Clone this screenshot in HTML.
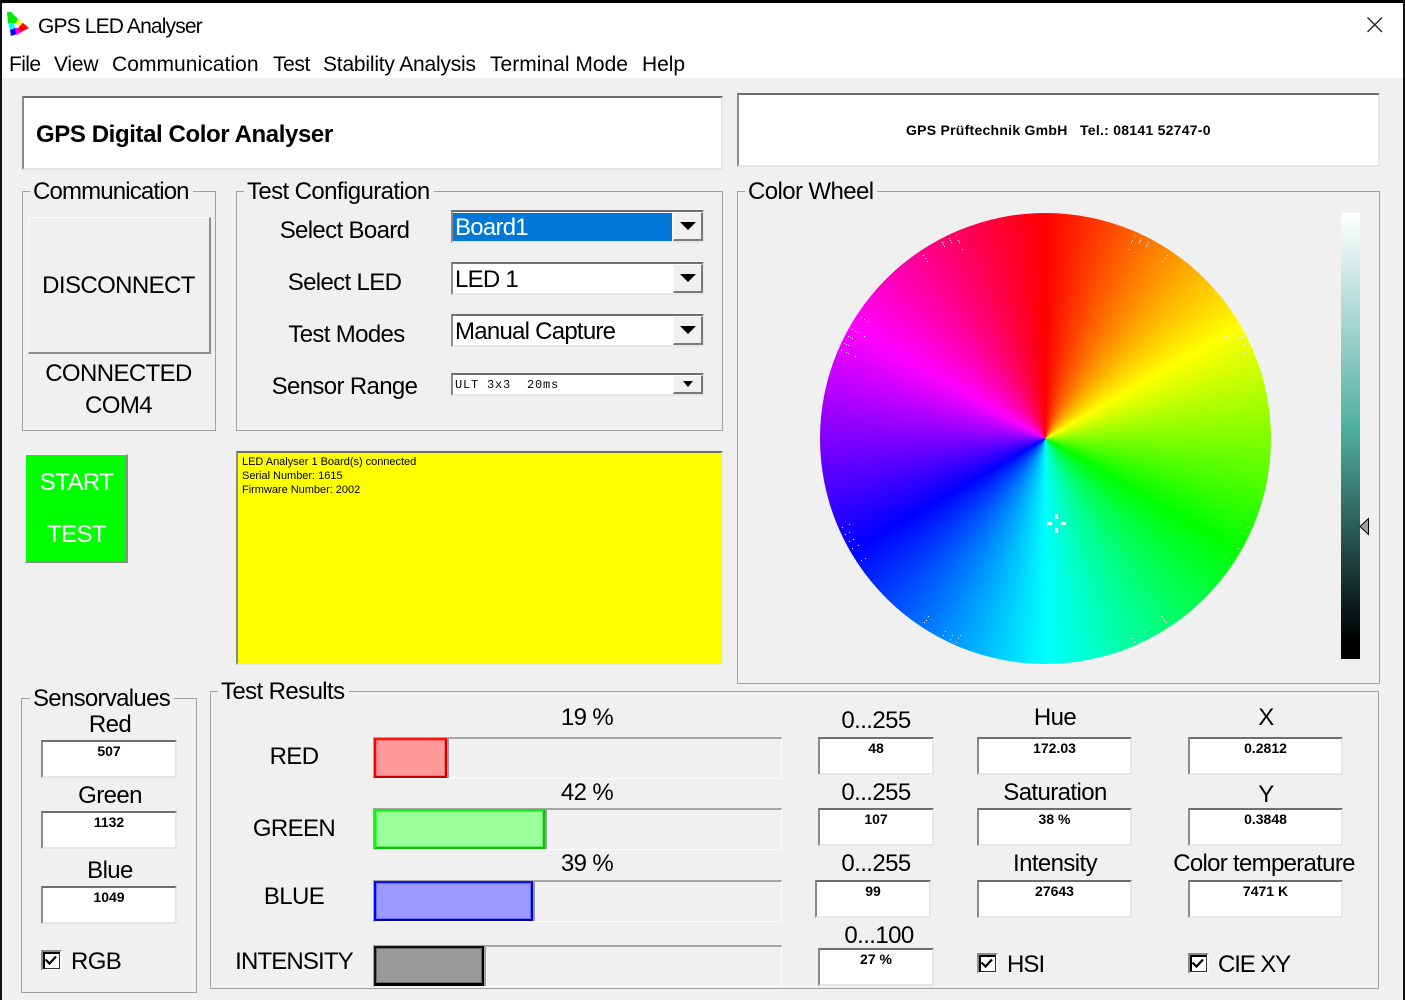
<!DOCTYPE html>
<html><head><meta charset="utf-8"><style>
html,body{margin:0;padding:0;width:1405px;height:1000px;overflow:hidden;background:#f0f0f0}
body{position:relative;font-family:"Liberation Sans",Arial,sans-serif;color:#000}
div,span{position:absolute;box-sizing:border-box}
.t{white-space:nowrap;font-size:24px;line-height:28px;letter-spacing:-.6px;margin-top:1px}
.c{text-align:center}
.g{border:1px solid #a0a0a0}
.lg{background:#f0f0f0;padding:0 4px 0 3px;white-space:nowrap;font-size:24px;line-height:28px;letter-spacing:-.6px;margin-top:1px}
.s{background:#fff;border-top:2px solid #6e6e6e;border-left:2px solid #8a8a8a;border-right:2px solid #e6e6e6;border-bottom:2px solid #e6e6e6}
.n{font-weight:bold;font-size:14px;line-height:16px;text-align:center;letter-spacing:0;padding-top:1px;white-space:nowrap}
.ar{background:#f0f0f0;border-right:2px solid #7a7a7a;border-bottom:2px solid #7a7a7a;border-top:1px solid #fff;border-left:1px solid #fff}
.ar i{position:absolute;left:50%;top:50%;width:0;height:0;margin-left:-8px;margin-top:-4px;border-left:8px solid transparent;border-right:8px solid transparent;border-top:8px solid #000}
.ar.sm i{margin-left:-5px;margin-top:-3px;border-left-width:5px;border-right-width:5px;border-top-width:6px}
.track{background:#f0f0f0;border-top:2px solid #a6a6a6;border-left:2px solid #a6a6a6;border-bottom:1px solid #fbfbfb;border-right:1px solid #fbfbfb}
.m{font-size:21px;letter-spacing:-.05px;top:50px}
.cb{width:21px;height:21px;background:#fff;border-top:2px solid #8a8a8a;border-left:2px solid #8a8a8a;border-right:2px solid #f8f8f8;border-bottom:2px solid #f8f8f8}
.cb i{position:absolute;left:0;top:0;right:0;bottom:0;border-top:2px solid #000;border-left:2px solid #000;border-right:1px solid #333;border-bottom:1px solid #333}
.f{border-style:solid;border-width:2px}
</style></head><body>
<div style="left:0;top:0;width:1405px;height:3px;background:#000"></div>
<div style="left:0;top:0;width:2px;height:1000px;background:#111"></div>
<div style="left:1403px;top:0;width:2px;height:1000px;background:#111"></div>
<div style="left:2px;top:3px;width:1401px;height:75px;background:#fff"></div>
<svg style="position:absolute;left:0;top:0" width="34" height="40" viewBox="0 0 34 40">
<path d="M7 12 L11 12 L20 21 L15 24 L8 23Z" fill="#00e800"/>
<path d="M8 23 L15 23 L15 29 L10 30Z" fill="#00ffff"/>
<path d="M10 30 L15 28 L17 34 L11 36Z" fill="#0000ff"/>
<path d="M15 28 L19 28 L22 32 L16 35Z" fill="#ff00ff"/>
<path d="M20 24 L23 23 L29 28 L21 32 L18 28Z" fill="#ff0000"/>
<path d="M18 19 L22 24 L19 27 L16 23Z" fill="#ffff00"/>
<path d="M14 23 L18 23 L19 28 L15 28Z" fill="#fff"/></svg>
<span class="t" style="left:38px;top:12px;font-size:21px;letter-spacing:-.85px">GPS LED Analyser</span>
<svg style="position:absolute;left:1366px;top:16px" width="18" height="18"><path d="M1.5 1.5L16 16M16 1.5L1.5 16" stroke="#222" stroke-width="1.3"/></svg>
<span class="t m" style="left:9px;letter-spacing:-.6px">File</span>
<span class="t m" style="left:54px;letter-spacing:-.2px">View</span>
<span class="t m" style="left:112px;letter-spacing:.05px">Communication</span>
<span class="t m" style="left:273px;letter-spacing:-.4px">Test</span>
<span class="t m" style="left:323px;letter-spacing:-.2px">Stability Analysis</span>
<span class="t m" style="left:490px;letter-spacing:.02px">Terminal Mode</span>
<span class="t m" style="left:642px">Help</span>

<div class="s" style="left:22px;top:96px;width:701px;height:74px"></div>
<span class="t" style="left:36px;top:120px;font-weight:bold;font-size:24px;letter-spacing:-.4px">GPS Digital Color Analyser</span>
<div class="s" style="left:737px;top:93px;width:643px;height:74px"></div>
<span class="t" style="left:906px;top:115px;font-weight:bold;font-size:14px;letter-spacing:.26px;white-space:pre">GPS Prüftechnik GmbH   Tel.: 08141 52747-0</span>

<div class="g" style="left:22px;top:191px;width:194px;height:240px"></div>
<span class="lg" style="left:30px;top:177px;letter-spacing:-.85px">Communication</span>
<div style="left:28px;top:217px;width:183px;height:137px;background:#f0f0f0;border-top:1px solid #fbfbfb;border-left:1px solid #fbfbfb;border-right:2px solid #8c8c8c;border-bottom:2px solid #8c8c8c"></div>
<div class="t c" style="left:28px;top:271px;width:181px">DISCONNECT</div>
<div class="t c" style="left:22px;top:359px;width:193px">CONNECTED</div>
<div class="t c" style="left:22px;top:391px;width:193px">COM4</div>

<div class="g" style="left:236px;top:191px;width:487px;height:240px"></div>
<span class="lg" style="left:244px;top:177px">Test Configuration</span>
<div class="t c" style="left:245px;top:216px;width:199px;letter-spacing:-.65px">Select Board</div>
<div class="t c" style="left:245px;top:268px;width:199px;letter-spacing:-.65px">Select LED</div>
<div class="t c" style="left:247px;top:320px;width:199px;letter-spacing:-.65px">Test Modes</div>
<div class="t c" style="left:245px;top:372px;width:199px;letter-spacing:-.65px">Sensor Range</div>

<div class="s" style="left:451px;top:210px;width:253px;height:33px"></div>
<div style="left:453px;top:213px;width:219px;height:28px;background:#0078d7"></div>
<span class="t" style="left:455px;top:213px;color:#fff;letter-spacing:-.75px">Board1</span>
<div class="ar" style="left:673px;top:212px;width:30px;height:29px"><i></i></div>
<div class="s" style="left:451px;top:262px;width:253px;height:33px"></div>
<span class="t" style="left:455px;top:265px;letter-spacing:-.75px">LED 1</span>
<div class="ar" style="left:673px;top:264px;width:30px;height:29px"><i></i></div>
<div class="s" style="left:451px;top:314px;width:253px;height:33px"></div>
<span class="t" style="left:455px;top:317px;letter-spacing:-.75px">Manual Capture</span>
<div class="ar" style="left:673px;top:316px;width:30px;height:29px"><i></i></div>
<div class="s" style="left:451px;top:373px;width:253px;height:23px"></div>
<span style="left:455px;top:378px;font-family:'Liberation Mono',monospace;font-size:12px;line-height:14px;white-space:pre;letter-spacing:.8px">ULT 3x3  20ms</span>
<div class="ar sm" style="left:673px;top:375px;width:30px;height:19px"><i></i></div>

<div style="left:25px;top:454px;width:103px;height:109px;background:#00ff00;border-top:1px solid #f8f8f8;border-left:1px solid #f8f8f8;border-right:2px solid #8c8c8c;border-bottom:2px solid #8c8c8c"></div>
<div class="t c" style="left:25px;top:468px;width:103px;color:#fff">START</div>
<div class="t c" style="left:25px;top:520px;width:103px;color:#fff">TEST</div>

<div class="s" style="left:236px;top:451px;width:487px;height:214px;background:#ffff00"></div>
<div style="left:242px;top:455px;font-size:11px;line-height:14px;white-space:nowrap;letter-spacing:-.02px">LED Analyser 1 Board(s) connected<br>Serial Number: 1615<br>Firmware Number: 2002</div>

<div class="g" style="left:737px;top:191px;width:643px;height:493px"></div>
<span class="lg" style="left:745px;top:177px">Color Wheel</span>
<div style="left:820px;top:213px;width:451px;height:451px;border-radius:50%;background:conic-gradient(#f00,#ff0,#0f0,#0ff,#00f,#f0f,#f00)"></div>
<svg style="position:absolute;left:0;top:0" width="1405" height="1000">
<path id="d" fill="#fff" d="M1241 524h1v1h-1zM1248 527h1v1h-1zM1241 532h1v1h-1zM1245 534h1v1h-1zM1237 539h1v1h-1zM1241 541h1v1h-1zM1232 545h1v1h-1zM1238 548h1v1h-1zM1225 558h1v1h-1zM1229 560h1v1h-1zM1162 616h1v1h-1zM1164 620h1v1h-1zM1166 622h1v1h-1zM1130 635h1v1h-1zM1132 638h1v1h-1zM1134 642h1v1h-1zM1138 635h1v1h-1zM1140 639h1v1h-1zM1145 631h1v1h-1zM1147 635h1v1h-1zM949 238h1v1h-1zM950 240h1v1h-1zM951 242h1v1h-1zM942 242h1v1h-1zM943 244h1v1h-1zM944 246h1v1h-1zM958 240h1v1h-1zM959 242h1v1h-1zM962 249h1v1h-1zM956 235h1v1h-1zM923 255h1v1h-1zM925 258h1v1h-1zM927 261h1v1h-1zM861 317h1v1h-1zM864 319h1v1h-1zM867 321h1v1h-1zM852 329h1v1h-1zM855 331h1v1h-1zM857 332h1v1h-1zM848 336h1v1h-1zM850 337h1v1h-1zM852 338h1v1h-1zM864 336h1v1h-1zM844 343h1v1h-1zM846 344h1v1h-1zM848 345h1v1h-1zM841 350h1v1h-1zM846 352h1v1h-1zM848 353h1v1h-1zM855 356h1v1h-1z"/>
<use href="#d" transform="translate(2091 0) scale(-1 1)"/>
<path fill="#fff" d="M1055 514h3v5h-3zM1055 528h3v5h-3zM1047 522h5v3h-5zM1061 522h5v3h-5z"/>
</svg>
<div style="left:1341px;top:213px;width:19px;height:446px;background:linear-gradient(#fff 0,#4fb0a2 48%,#000 96%,#000 100%)"></div>
<svg style="position:absolute;left:1359px;top:517px" width="11" height="19"><path d="M1 9.5L9.5 1.5V17.5Z" fill="#a0a0a0" stroke="#000" stroke-width="1"/></svg>

<div class="g" style="left:21px;top:698px;width:176px;height:295px"></div>
<span class="lg" style="left:30px;top:684px;letter-spacing:-.7px">Sensorvalues</span>
<div class="t c" style="left:21px;top:710px;width:178px">Red</div>
<div class="s n" style="left:41px;top:740px;width:136px;height:38px">507</div>
<div class="t c" style="left:21px;top:781px;width:178px">Green</div>
<div class="s n" style="left:41px;top:811px;width:136px;height:38px">1132</div>
<div class="t c" style="left:21px;top:856px;width:178px">Blue</div>
<div class="s n" style="left:41px;top:886px;width:136px;height:38px">1049</div>
<div class="cb" style="left:41px;top:950px"><i></i></div>
<svg style="position:absolute;left:41px;top:950px" width="21" height="21"><path d="M4.5 9.5L8.5 13.5L15 6.5" fill="none" stroke="#000" stroke-width="2.2"/></svg>
<span class="t" style="left:71px;top:947px">RGB</span>

<div class="g" style="left:210px;top:691px;width:1169px;height:298px"></div>
<span class="lg" style="left:218px;top:677px">Test Results</span>
<div class="t c" style="left:487px;top:703px;width:200px">19 %</div>
<div class="t c" style="left:487px;top:778px;width:200px">42 %</div>
<div class="t c" style="left:487px;top:849px;width:200px">39 %</div>
<div class="t c" style="left:214px;top:742px;width:160px">RED</div>
<div class="t c" style="left:214px;top:814px;width:160px">GREEN</div>
<div class="t c" style="left:214px;top:882px;width:160px">BLUE</div>
<div class="t c" style="left:214px;top:947px;width:160px;letter-spacing:-.85px">INTENSITY</div>

<div class="track" style="left:373px;top:737px;width:409px;height:42px"></div>
<div style="left:447px;top:739px;width:2px;height:39px;background:#9a9a9a"></div>
<div class="f" style="left:374px;top:738px;width:73px;height:40px;background:#ff9999;border-color:#ff1010 #c80000 #c00000 #f00;box-shadow:inset 0 0 0 1px #ff6a6a"></div>
<div class="track" style="left:373px;top:808px;width:409px;height:42px"></div>
<div style="left:545px;top:810px;width:2px;height:39px;background:#9a9a9a"></div>
<div class="f" style="left:374px;top:809px;width:171px;height:40px;background:#99ff99;border-color:#10f010 #00c800 #00c000 #0f0;box-shadow:inset 0 0 0 1px #66ee66"></div>
<div class="track" style="left:373px;top:880px;width:409px;height:42px"></div>
<div style="left:533px;top:882px;width:2px;height:39px;background:#9a9a9a"></div>
<div class="f" style="left:374px;top:881px;width:159px;height:40px;background:#9999ff;border-color:#1010f0 #0000c8 #0000c0 #00f;box-shadow:inset 0 0 0 1px #6a6aff"></div>
<div class="track" style="left:373px;top:945px;width:409px;height:42px"></div>
<div style="left:484px;top:947px;width:2px;height:39px;background:#a0a0a0"></div>
<div class="f" style="left:374px;top:946px;width:110px;height:40px;background:#999;border-color:#111 #000 #000 #111;border-bottom-width:3px;box-shadow:inset 0 0 0 1px #666"></div>

<div class="t c" style="left:796px;top:706px;width:160px">0...255</div>
<div class="s n" style="left:818px;top:737px;width:116px;height:38px">48</div>
<div class="t c" style="left:796px;top:778px;width:160px">0...255</div>
<div class="s n" style="left:818px;top:808px;width:116px;height:38px">107</div>
<div class="t c" style="left:796px;top:849px;width:160px">0...255</div>
<div class="s n" style="left:815px;top:880px;width:116px;height:38px">99</div>
<div class="t c" style="left:799px;top:921px;width:160px">0...100</div>
<div class="s n" style="left:818px;top:948px;width:116px;height:38px">27 %</div>

<div class="t c" style="left:955px;top:703px;width:200px">Hue</div>
<div class="s n" style="left:977px;top:737px;width:155px;height:38px">172.03</div>
<div class="t c" style="left:955px;top:778px;width:200px">Saturation</div>
<div class="s n" style="left:977px;top:808px;width:155px;height:38px">38 %</div>
<div class="t c" style="left:955px;top:849px;width:200px">Intensity</div>
<div class="s n" style="left:977px;top:880px;width:155px;height:38px">27643</div>
<div class="cb" style="left:977px;top:953px"><i></i></div>
<svg style="position:absolute;left:977px;top:953px" width="21" height="21"><path d="M4.5 9.5L8.5 13.5L15 6.5" fill="none" stroke="#000" stroke-width="2.2"/></svg>
<span class="t" style="left:1007px;top:950px;letter-spacing:-.9px">HSI</span>

<div class="t c" style="left:1166px;top:703px;width:200px">X</div>
<div class="s n" style="left:1188px;top:737px;width:155px;height:38px">0.2812</div>
<div class="t c" style="left:1166px;top:780px;width:200px">Y</div>
<div class="s n" style="left:1188px;top:808px;width:155px;height:38px">0.3848</div>
<div class="t c" style="left:1134px;top:849px;width:260px;letter-spacing:-.7px">Color temperature</div>
<div class="s n" style="left:1188px;top:880px;width:155px;height:38px">7471 K</div>
<div class="cb" style="left:1188px;top:953px"><i></i></div>
<svg style="position:absolute;left:1188px;top:953px" width="21" height="21"><path d="M4.5 9.5L8.5 13.5L15 6.5" fill="none" stroke="#000" stroke-width="2.2"/></svg>
<span class="t" style="left:1218px;top:950px;letter-spacing:-1.1px">CIE XY</span>
</body></html>
